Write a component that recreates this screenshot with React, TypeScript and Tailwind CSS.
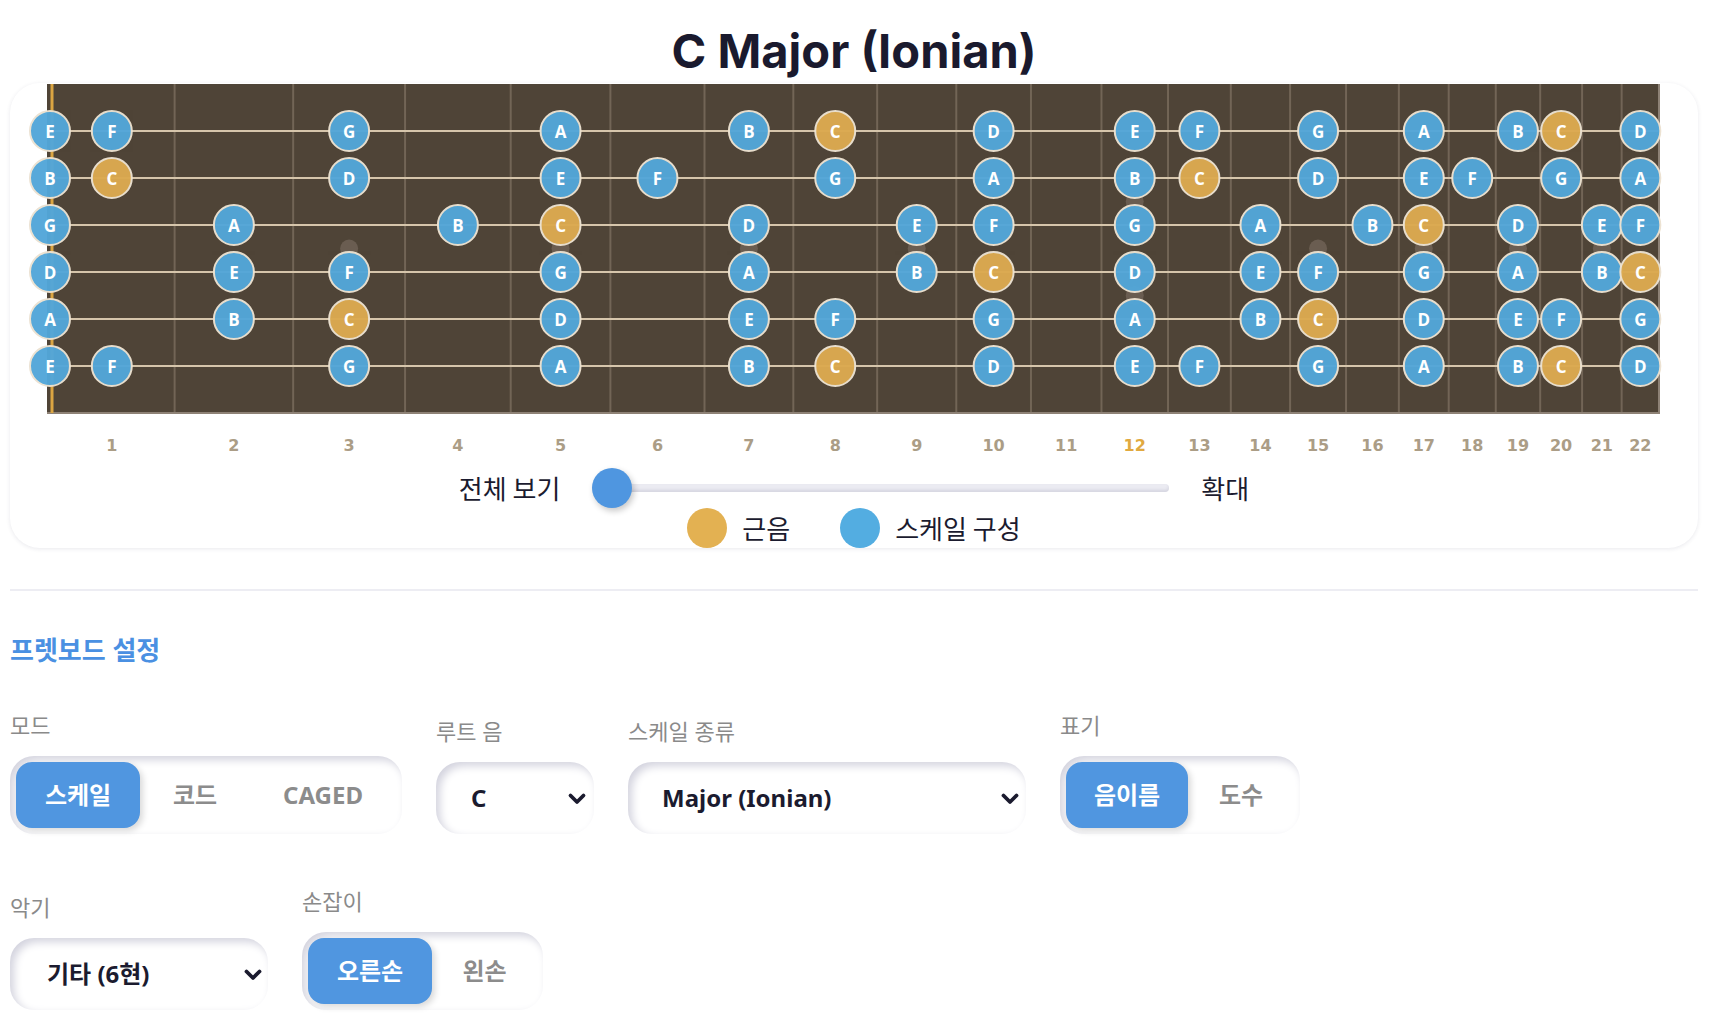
import React from 'react';

const NOTES = ['C', 'C#', 'D', 'D#', 'E', 'F', 'F#', 'G', 'G#', 'A', 'A#', 'B'];
const SCALE = new Set(['C', 'D', 'E', 'F', 'G', 'A', 'B']);
const OPEN = [4, 11, 7, 2, 9, 4];
const STRING_Y = [131, 178, 225, 272, 319, 366];
const DEN = 1 - Math.pow(2, -22 / 12);
const fretX = (n: number) => 49 + (1610 * (1 - Math.pow(2, -n / 12))) / DEN;
const noteX = (n: number) => (n === 0 ? 50 : (fretX(n - 1) + fretX(n)) / 2);

function Fretboard() {
  const notes: { x: number; y: number; name: string; root: boolean }[] = [];
  STRING_Y.forEach((y, s) => {
    for (let f = 0; f <= 22; f++) {
      const name = NOTES[(OPEN[s] + f) % 12];
      if (SCALE.has(name)) notes.push({ x: noteX(f), y, name, root: name === 'C' });
    }
  });
  const inlays = [3, 5, 7, 9, 15, 17, 19, 21];
  const frets = Array.from({ length: 21 }, (_, i) => i + 1);
  const labels = Array.from({ length: 22 }, (_, i) => i + 1);
  return (
    <svg width={1688} height={375} viewBox="10 83 1688 375" className="block">
      <rect x={47} y={84} width={1612} height={329} fill="#4f4437" />
      {frets.map((n) => (
        <line key={n} x1={fretX(n)} x2={fretX(n)} y1={84} y2={413} stroke="#726556" strokeWidth={2} />
      ))}
      <line x1={1659} x2={1659} y1={84} y2={413} stroke="#8e8276" strokeWidth={2} />
      <line x1={47} x2={1660} y1={413} y2={413} stroke="#8e8276" strokeWidth={2} />
      {inlays.map((n) => (
        <circle key={n} cx={noteX(n)} cy={248.5} r={9} fill="#6a5d51" />
      ))}
      <circle cx={noteX(12)} cy={201.5} r={9} fill="#6a5d51" />
      <circle cx={noteX(12)} cy={295.5} r={9} fill="#6a5d51" />
      {STRING_Y.map((y) => (
        <line key={y} x1={47} x2={1659} y1={y} y2={y} stroke="#d6c5ab" strokeWidth={2} />
      ))}
      <rect x={50.5} y={84} width={3} height={329} fill="#dba542" />
      {notes.map((n, i) => (
        <g key={i}>
          <circle
            cx={n.x}
            cy={n.y}
            r={20}
            fill={n.root ? '#dcaa50' : '#53a7d9'}
            stroke="#ece2d1"
            strokeWidth={2}
            opacity={0.97}
          />
          <text
            x={n.x}
            y={n.y + 0.5}
            textAnchor="middle"
            dominantBaseline="central"
            fill="#ffffff"
            fontFamily="'Open Sans', 'Noto Sans', sans-serif"
            fontWeight={700}
            fontSize={17}
          >
            {n.name}
          </text>
        </g>
      ))}
      {labels.map((n) => (
        <text
          key={n}
          x={noteX(n)}
          y={445}
          textAnchor="middle"
          dominantBaseline="central"
          fill={n === 12 ? '#e1a93f' : '#ab9d86'}
          fontFamily="'DejaVu Sans', sans-serif"
          fontWeight={700}
          fontSize={16}
        >
          {n}
        </text>
      ))}
    </svg>
  );
}

function Chevron() {
  return (
    <svg width={20} height={13} viewBox="0 0 20 13" className="block">
      <path d="M3.5 3.5 L10 10 L16.5 3.5" fill="none" stroke="#1b1b2f" strokeWidth={3.8} strokeLinecap="round" strokeLinejoin="round" />
    </svg>
  );
}

const inset = 'shadow-[inset_4px_4px_8px_#d3d3de,inset_-4px_-4px_8px_#ffffff]';

export default function App() {
  return (
    <div className="bg-white pl-[10px] pr-[14px] pb-[10px] font-['Noto_Sans','Noto_Sans_CJK_KR',sans-serif] text-[#1b1b2f]">
      <h1 className="pt-[20px] text-center font-['Inter','Noto_Sans_CJK_KR',sans-serif] text-[47px] font-bold leading-[62px] text-[#1a1a2e]">
        C Major (Ionian)
      </h1>
      <div className="mt-[1px] overflow-hidden rounded-[30px] bg-white shadow-[0_1px_4px_rgba(40,40,80,0.1)]">
        <Fretboard />
        <div className="mt-[10px] flex h-[40px] items-center justify-center gap-[32px]">
          <span className="text-[26px] leading-[40px] font-['Noto_Sans_CJK_KR',sans-serif]">전체 보기</span>
          <div className="relative flex h-[40px] w-[577px] items-center">
            <div className="h-[8px] w-full rounded-full bg-[#ebebf2] shadow-[inset_0_-2px_3px_rgba(60,60,100,0.12)]" />
            <div className="absolute left-0 top-0 h-[40px] w-[40px] rounded-full bg-[#4f96e0] shadow-[2px_3px_6px_rgba(0,0,0,0.22)]" />
          </div>
          <span className="text-[26px] leading-[40px] font-['Noto_Sans_CJK_KR',sans-serif]">확대</span>
        </div>
        <div className="flex h-[40px] items-center justify-center gap-[50px]">
          <div className="flex items-center gap-[15px]">
            <div className="h-[40px] w-[40px] rounded-full bg-[#e3b152]" />
            <span className="text-[26px] leading-[40px] font-['Noto_Sans_CJK_KR',sans-serif]">근음</span>
          </div>
          <div className="flex items-center gap-[15px]">
            <div className="h-[40px] w-[40px] rounded-full bg-[#53ade1]" />
            <span className="text-[26px] leading-[40px] font-['Noto_Sans_CJK_KR',sans-serif]">스케일 구성</span>
          </div>
        </div>
      </div>

      <div className="mt-[41px] h-[2px] bg-[#ededf3]" />

      <h2 className="mt-[43px] text-[26px] font-bold leading-[32px] text-[#4a90e2]">프렛보드 설정</h2>

      <div className="mt-[45px] flex items-end gap-[34px]">
        <div className="flex flex-col">
          <span className="mb-[17px] text-[22px] leading-[28px] text-[#8a8a8a]">모드</span>
          <div className={`flex h-[78px] w-[392px] items-center rounded-[24px] p-[6px] ${inset}`}>
            <div className="flex h-[66px] w-[124px] items-center justify-center rounded-[16px] bg-[#5096e0] text-[24px] font-bold text-white shadow-[3px_3px_6px_rgba(0,0,0,0.15)]">
              스케일
            </div>
            <div className="flex h-[66px] w-[110px] items-center justify-center text-[24px] font-bold text-[#8c8c8c]">코드</div>
            <div className="flex h-[66px] w-[146px] items-center justify-center text-[24px] font-bold text-[#8c8c8c]">CAGED</div>
          </div>
        </div>
        <div className="flex flex-col">
          <span className="mb-[17px] text-[22px] leading-[28px] text-[#8a8a8a]">루트 음</span>
          <div className={`flex h-[72px] w-[158px] items-center justify-between rounded-[24px] pl-[35px] pr-[7px] ${inset}`}>
            <span className="text-[24px] font-bold">C</span>
            <Chevron />
          </div>
        </div>
        <div className="flex flex-col">
          <span className="mb-[17px] text-[22px] leading-[28px] text-[#8a8a8a]">스케일 종류</span>
          <div className={`flex h-[72px] w-[398px] items-center justify-between rounded-[24px] pl-[34px] pr-[6px] ${inset}`}>
            <span className="text-[24px] font-bold">Major (Ionian)</span>
            <Chevron />
          </div>
        </div>
        <div className="flex flex-col">
          <span className="mb-[17px] text-[22px] leading-[28px] text-[#8a8a8a]">표기</span>
          <div className={`flex h-[78px] w-[240px] items-center rounded-[24px] p-[6px] ${inset}`}>
            <div className="flex h-[66px] w-[122px] items-center justify-center rounded-[16px] bg-[#5096e0] text-[24px] font-bold text-white shadow-[3px_3px_6px_rgba(0,0,0,0.15)]">
              음이름
            </div>
            <div className="flex h-[66px] w-[106px] items-center justify-center text-[24px] font-bold text-[#8c8c8c]">도수</div>
          </div>
        </div>
      </div>

      <div className="mt-[53px] flex items-end gap-[34px]">
        <div className="flex flex-col">
          <span className="mb-[17px] text-[22px] leading-[28px] text-[#8a8a8a]">악기</span>
          <div className={`flex h-[72px] w-[258px] items-center justify-between rounded-[24px] pl-[37px] pr-[5px] ${inset}`}>
            <span className="text-[24px] font-bold">기타 (6현)</span>
            <Chevron />
          </div>
        </div>
        <div className="flex flex-col">
          <span className="mb-[17px] text-[22px] leading-[28px] text-[#8a8a8a]">손잡이</span>
          <div className={`flex h-[78px] w-[241px] items-center rounded-[24px] p-[6px] ${inset}`}>
            <div className="flex h-[66px] w-[124px] items-center justify-center rounded-[16px] bg-[#5096e0] text-[24px] font-bold text-white shadow-[3px_3px_6px_rgba(0,0,0,0.15)]">
              오른손
            </div>
            <div className="flex h-[66px] w-[105px] items-center justify-center text-[24px] font-bold text-[#8c8c8c]">왼손</div>
          </div>
        </div>
      </div>
    </div>
  );
}
